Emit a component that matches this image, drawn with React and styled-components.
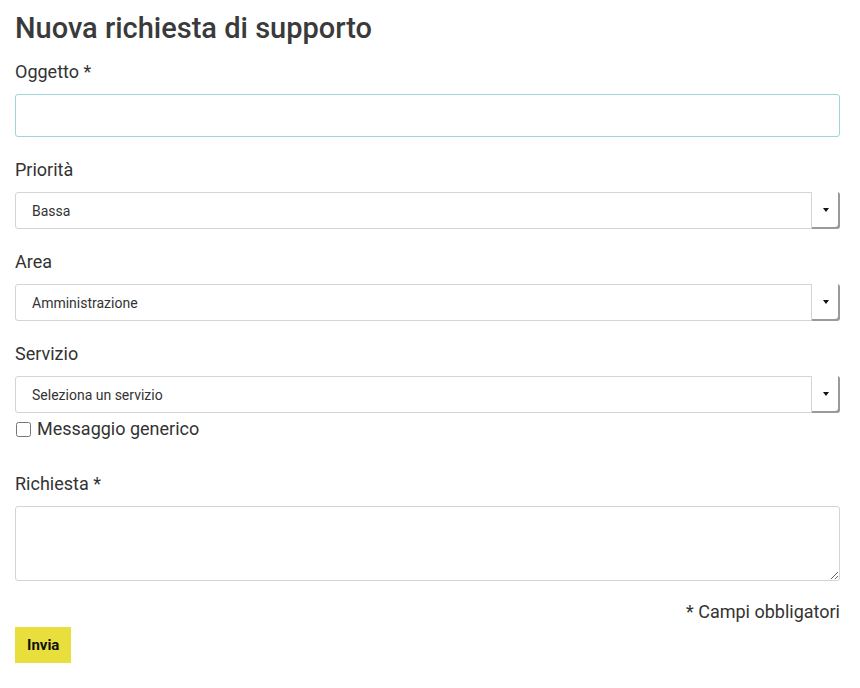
import React from "react";
import styled, { createGlobalStyle } from "styled-components";

const GlobalStyle = createGlobalStyle`
  html, body {
    margin: 0;
    padding: 0;
    background: #ffffff;
  }
  body {
    font-family: Roboto, "Open Sans", sans-serif;
    color: #333333;
  }
  * {
    box-sizing: border-box;
  }
`;

const Page = styled.div`
  width: 825px;
  margin-left: 15px;
  padding-top: 11px;
`;

const Title = styled.h1`
  margin: 0 0 16px;
  font-size: 29px;
  line-height: 35px;
  font-weight: 500;
  color: #3a3a3a;
`;

const Group = styled.div`
  margin-bottom: ${props => props.mb ?? 23}px;
`;

const Label = styled.label`
  display: block;
  margin-bottom: 12px;
  font-size: 18px;
  line-height: 20px;
  color: #333333;
`;

const TextInput = styled.input`
  display: block;
  width: 100%;
  height: 43px;
  padding: 0 16px;
  border: 1px solid ${props => (props.focused ? "#9dd5d8" : "#d4d4d4")};
  border-radius: 3px;
  font-family: inherit;
  font-size: 14px;
  outline: none;
`;

const SelectBox = styled.div`
  display: flex;
  height: 37px;
  border: 1px solid #d4d4d4;
  border-radius: 3px;
  background: #ffffff;
`;

const SelectText = styled.select`
  flex: 1;
  min-width: 0;
  padding: 0 16px;
  border: none;
  background: transparent;
  appearance: none;
  font-family: inherit;
  font-size: 14px;
  color: #333333;
  outline: none;
`;

const ArrowButton = styled.span`
  display: flex;
  align-items: center;
  justify-content: center;
  width: 29px;
  margin: -1px -1px -1px 0;
  border-left: 1px solid #d4d4d4;
  border-radius: 0 3px 3px 0;
  box-shadow: inset -2px -2px 0 #9a9a9a;
  background: #ffffff;
`;

const Caret = styled.span`
  width: 0;
  height: 0;
  margin: -1px 1px 0 0;
  border-left: 3.5px solid transparent;
  border-right: 3.5px solid transparent;
  border-top: 4px solid #111111;
`;

const CheckRow = styled.label`
  display: flex;
  align-items: center;
  gap: 6px;
  margin: 2px 0 32px;
  font-size: 18px;
  line-height: 27px;
  color: #333333;
`;

const Checkbox = styled.input`
  width: 15px;
  height: 15px;
  margin: 1px 0 0 1px;
`;

const TextArea = styled.textarea`
  display: block;
  width: 100%;
  height: 75px;
  padding: 8px 16px;
  border: 1px solid #d4d4d4;
  border-radius: 3px;
  font-family: inherit;
  font-size: 14px;
  resize: vertical;
  outline: none;
`;

const Note = styled.div`
  margin: 21px 0 5px;
  text-align: right;
  font-size: 18px;
  line-height: 20px;
  color: #333333;
`;

const SubmitButton = styled.button`
  display: block;
  height: 36px;
  padding: 0 12px;
  border: none;
  border-radius: 0;
  background: #e8de3c;
  font-family: inherit;
  font-size: 15px;
  font-weight: 700;
  color: #111111;
  cursor: pointer;
`;

function Select({ id, value, options }) {
  return (
    <SelectBox>
      <SelectText id={id} defaultValue={value}>
        {options.map(o => (
          <option key={o}>{o}</option>
        ))}
      </SelectText>
      <ArrowButton>
        <Caret />
      </ArrowButton>
    </SelectBox>
  );
}

export default function App() {
  return (
    <Page>
      <GlobalStyle />
      <Title>Nuova richiesta di supporto</Title>

      <Group>
        <Label htmlFor="oggetto">Oggetto *</Label>
        <TextInput id="oggetto" type="text" focused />
      </Group>

      <Group>
        <Label htmlFor="priorita">Priorità</Label>
        <Select id="priorita" value="Bassa" options={["Bassa", "Media", "Alta"]} />
      </Group>

      <Group>
        <Label htmlFor="area">Area</Label>
        <Select
          id="area"
          value="Amministrazione"
          options={["Amministrazione", "Tecnica", "Commerciale"]}
        />
      </Group>

      <Group mb={0}>
        <Label htmlFor="servizio">Servizio</Label>
        <Select
          id="servizio"
          value="Seleziona un servizio"
          options={["Seleziona un servizio"]}
        />
      </Group>

      <CheckRow>
        <Checkbox type="checkbox" />
        Messaggio generico
      </CheckRow>

      <Group mb={0}>
        <Label htmlFor="richiesta">Richiesta *</Label>
        <TextArea id="richiesta" />
      </Group>

      <Note>* Campi obbligatori</Note>
      <SubmitButton type="submit">Invia</SubmitButton>
    </Page>
  );
}
